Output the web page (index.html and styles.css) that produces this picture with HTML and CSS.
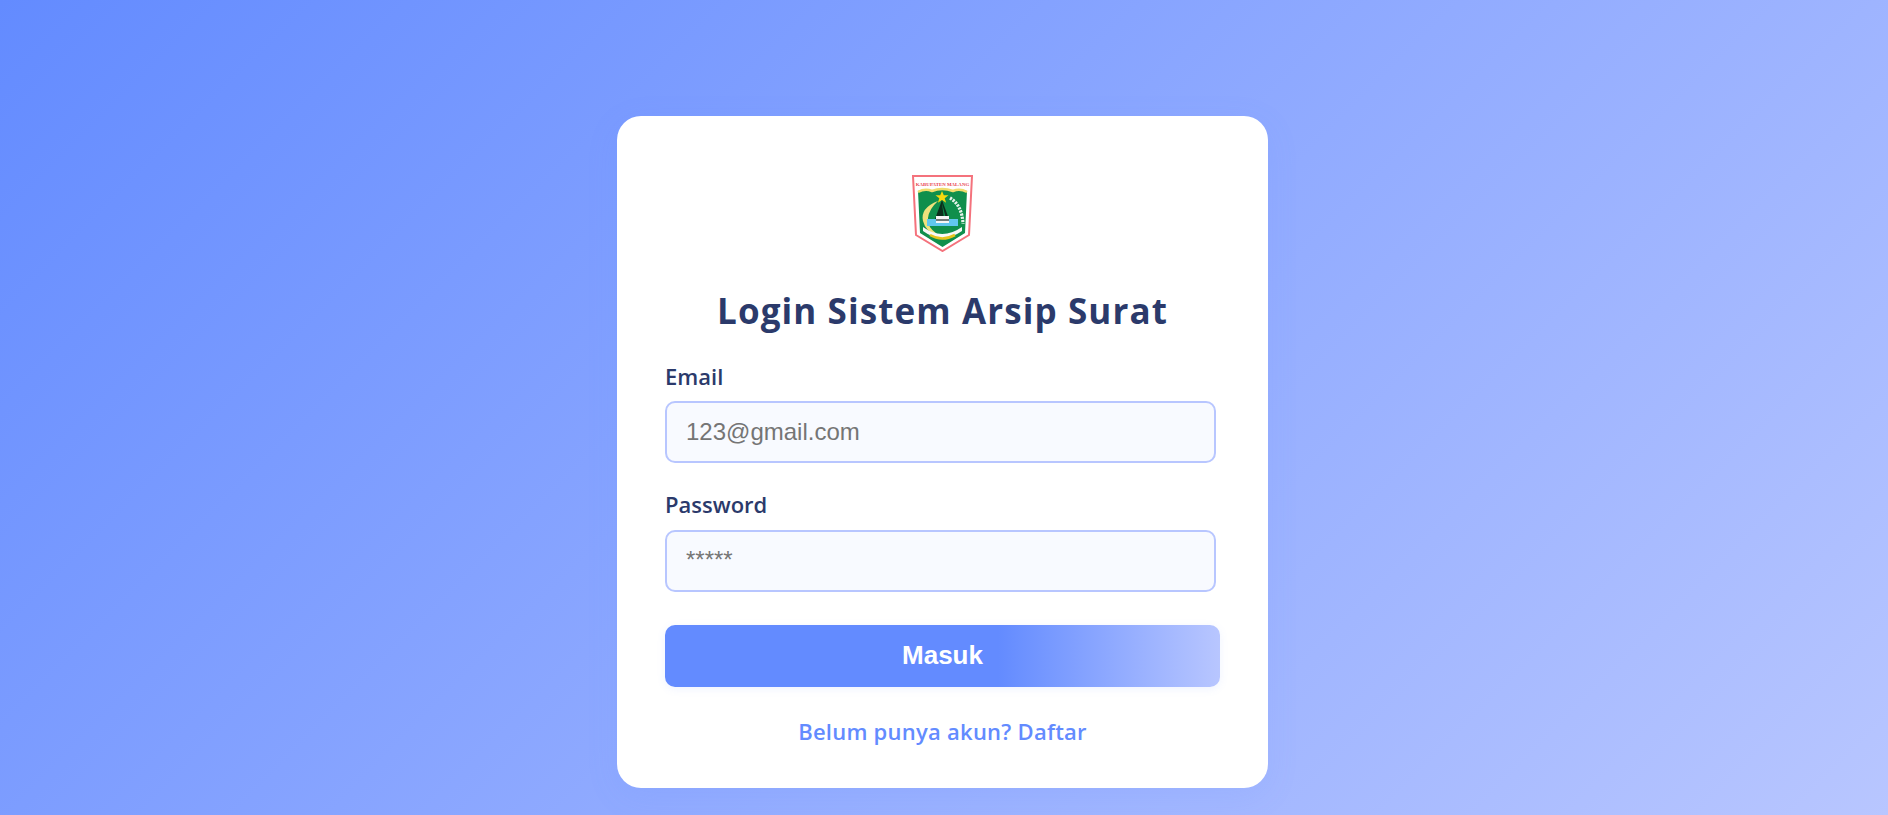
FILE: index.html
```html
<!DOCTYPE html>
<html lang="id">
<head>
<meta charset="utf-8">
<title>Login Sistem Arsip Surat</title>
<link rel="stylesheet" href="styles.css">
</head>
<body>
<main class="card">
  <div class="logo-wrap">
    <svg class="logo" viewBox="0 0 61 77" width="61" height="77" role="img" aria-label="Lambang Kabupaten Malang">
      <path d="M1 1H60L57 60L30.500 76L4 60Z" fill="#fff" stroke="#f4727c" stroke-width="2"/>
      <path d="M6 16Q13 13 20 16Q30 12 41 16Q48 13 55 16L53 58L30.500 72L8 58Z" fill="#0f8f4c"/>
      <path d="M6 17Q13 13 20 16Q30 12 41 16Q48 13 55 17" fill="none" stroke="#f0dc6c" stroke-width="2.500"/>
      <text x="30.500" y="10.500" class="logo-text">KABUPATEN MALANG</text>
      <path d="M30 16L31.800 20.300H36.500L32.700 23.200L34.100 27.800L30 25L25.900 27.800L27.300 23.200L23.500 20.300H28.200Z" fill="#f5d90f"/>
      <path d="M26 26Q8 33 11 46Q14 58 25 59Q15 52 16 43Q17 34 26 26Z" fill="#efe27c"/>
      <path d="M30 25L37 44H23Z" fill="#0a2f1c"/>
      <path d="M30 28L32 44H34Z" fill="#0f8f4c"/>
      <path d="M38 23Q50 30 51 49" fill="none" stroke="#e6f3ea" stroke-width="3.200" stroke-dasharray="2.200 1.100"/>
      <path d="M15 44H46V51H15Z" fill="#61c7ee"/>
      <path d="M24 41H37V48H24Z" fill="#f6f6f6"/>
      <path d="M24 45H37" stroke="#1e2a28" stroke-width="1.200"/>
      <path d="M11 52Q30 66 50 52L50 56Q30 70 11 56Z" fill="#f7f7f7"/>
      <path d="M18 60Q30 67 43 60" fill="none" stroke="#e4c51f" stroke-width="2.600"/>
    </svg>
  </div>
  <h1 class="title">Login Sistem Arsip Surat</h1>
  <form class="form">
    <label class="label" for="email">Email</label>
    <input class="input" id="email" type="text" placeholder="123@gmail.com">
    <label class="label label-second" for="password">Password</label>
    <input class="input input-password" id="password" type="password" placeholder="*****">
    <button class="submit" type="button">Masuk</button>
  </form>
  <a class="register" href="#">Belum punya akun? Daftar</a>
</main>
</body>
</html>
```

FILE: styles.css
```css
* { box-sizing: border-box; }
html, body { height: 100%; }
body {
  margin: 0;
  overflow: hidden;
  padding-top: 116px;
  background: linear-gradient(135deg, #638bff 0%, #b8c6ff 100%);
  font-family: "Open Sans", "Noto Sans", sans-serif;
}
.card {
  width: 651px;
  height: 672px;
  margin-left: 617px;
  padding: 59px 48px 0;
  background: #fff;
  border-radius: 24px;
  box-shadow: 0 8px 32px rgba(99, 139, 255, 0.12);
  display: flex;
  flex-direction: column;
}
.logo-wrap { display: flex; justify-content: center; }
.logo { display: block; }
.logo-text { font-family: "Liberation Serif", serif; font-size: 4.900px; font-weight: 700; fill: #e8414f; text-anchor: middle; }
.title {
  margin: 35px 0 0;
  text-align: center;
  font-size: 35px;
  line-height: 48px;
  font-weight: 700;
  letter-spacing: 1.100px;
  color: #2b3a6b;
}
.form { display: flex; flex-direction: column; margin-top: 26px; }
.label { font-size: 22px; line-height: 30px; font-weight: 600; color: #2b3a6b; }
.label-second { margin-top: 26px; margin-bottom: 1px; }
.input {
  width: 551px;
  height: 62px;
  margin-top: 10px;
  padding: 0 19px;
  border: 2px solid #b8c6ff;
  border-radius: 10px;
  background: #f8faff;
  font-family: "Liberation Sans", Arial, sans-serif;
  font-size: 24px;
  outline: none;
}
.input::placeholder { color: #757575; opacity: 1; }
.input-password { padding-bottom: 2px; }
.submit {
  width: 555px;
  height: 62px;
  margin-top: 33px;
  padding: 0 0 2px;
  border: 0;
  border-radius: 10px;
  background: linear-gradient(90deg, #638bff 60%, #b8c6ff 100%);
  box-shadow: 0 2px 8px rgba(99, 139, 255, 0.1);
  color: #fff;
  font-family: "Liberation Sans", Arial, sans-serif;
  font-size: 26px;
  font-weight: 700;
}
.register {
  margin-top: 29px;
  text-align: center;
  font-size: 22px;
  line-height: 30px;
  font-weight: 600;
  letter-spacing: 0.250px;
  color: #638bff;
  text-decoration: none;
}
```
